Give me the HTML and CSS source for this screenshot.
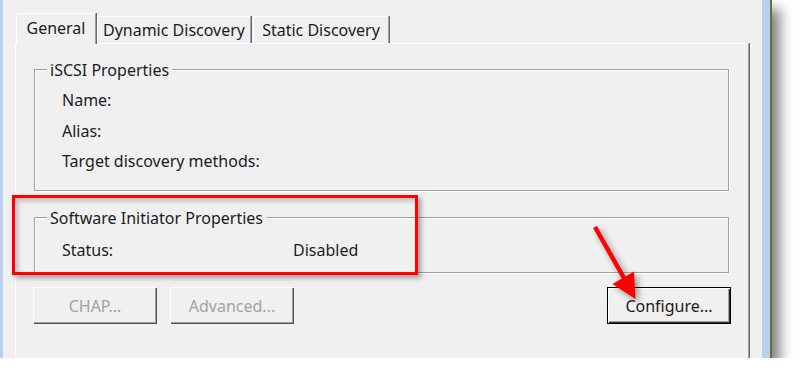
FILE: index.html
```html
<!DOCTYPE html>
<html lang="en">
<head>
<meta charset="utf-8">
<title>iSCSI Initiator Properties</title>
<link rel="stylesheet" href="styles.css">
</head>
<body>
<div class="shot">
  <div class="edge-left"></div>
  <div class="dialog">
    <div class="tabs">
      <div class="tab tab-general selected">General</div>
      <div class="tab tab-dynamic">Dynamic Discovery</div>
      <div class="tab tab-static">Static Discovery</div>
    </div>
    <div class="panel">
      <div class="group group-iscsi">
        <div class="group-title">iSCSI Properties</div>
        <div class="row">Name:</div>
        <div class="row">Alias:</div>
        <div class="row">Target discovery methods:</div>
      </div>
      <div class="group group-sw">
        <div class="group-title">Software Initiator Properties</div>
        <div class="row kv"><span>Status:</span><span>Disabled</span></div>
      </div>
      <div class="buttons">
        <button class="btn" disabled>CHAP...</button>
        <button class="btn" disabled>Advanced...</button>
        <button class="btn default">Configure...</button>
      </div>
    </div>
  </div>
  <div class="edge-right"></div>
  <div class="edge-line"></div>

  <div class="highlight"></div>
  <svg class="arrow" width="70" height="100" viewBox="0 0 70 100">
    <line x1="6" y1="7" x2="35" y2="58" stroke="#ff0000" stroke-width="4.5" stroke-linecap="butt"/>
    <polygon points="23.5,64 45,51.5 46.5,79" fill="#ff0000"/>
  </svg>
</div>
</body>
</html>
```
FILE: styles.css
```css
* { box-sizing: border-box; }
html, body { margin: 0; padding: 0; background: #ffffff; }
body {
  font-family: "Noto Sans", "Open Sans", sans-serif;
  font-size: 16px;
  color: #1b1b22;
}
.shot {
  position: relative;
  display: flex;
  width: 772px;
  height: 358px;
  box-shadow: 8px 9px 12px rgba(0, 0, 0, 0.5);
}
.edge-left { width: 3px; background: #b9d1ea; }
.edge-right { width: 8px; background: #b9d1ea; }
.edge-line { width: 2px; background: #6d6b3c; }
.dialog {
  flex: 1;
  background: #f0f0f0;
  padding: 13px 0 0 12px;
  display: flex;
  flex-direction: column;
}
.tabs {
  display: flex;
  align-items: flex-end;
  height: 30px;
  margin-left: 1px;
}
.tab {
  height: 27px;
  line-height: 27px;
  text-align: center;
  background: #f0f0f0;
  border-top: 1px solid #ffffff;
  border-left: 1px solid #ffffff;
  border-right: 1px solid #a0a0a0;
  box-shadow: 1px 0 0 #696969;
  border-top-left-radius: 2px;
  white-space: nowrap;
}
.tab.selected {
  height: 31px;
  line-height: 28px;
  margin-bottom: -1px;
  position: relative;
  z-index: 1;
}
.tab-general { width: 80px; }
.tab-dynamic { width: 154px; margin-left: 1px; }
.tab-static { width: 136px; margin-left: 2px; }
.panel {
  width: 734px;
  height: 315px;
  border-top: 1px solid #ffffff;
  border-left: 1px solid #ffffff;
  border-right: 1px solid #a0a0a0;
  box-shadow: 1px 0 0 #696969;
  overflow: hidden;
}
.group {
  margin-left: 18px;
  width: 695px;
  border: 1px solid #a0a0a0;
  box-shadow: inset 1px 1px 0 #ffffff, 1px 1px 0 #ffffff;
  padding-left: 27px;
}
.group-iscsi { margin-top: 25px; height: 122px; }
.group-sw { margin-top: 26px; height: 56px; }
.group-title {
  width: fit-content;
  margin: -10px 0 0 -15px;
  padding: 0 3px;
  height: 20px;
  line-height: 20px;
  background: #f0f0f0;
  position: relative;
}
.group-iscsi .group-title + .row { margin-top: 5px; }
.row {
  height: 30.5px;
  line-height: 30px;
}
.kv {
  display: grid;
  grid-template-columns: 231px auto;
  margin-top: 7px;
}
.buttons {
  display: flex;
  gap: 13px;
  padding: 0 17px;
  margin-top: 14px;
}
.btn {
  width: 124px;
  height: 37px;
  font: inherit;
  color: #1b1b22;
  background: #f0f0f0;
  border: none;
  border-radius: 0;
  padding: 0;
  box-shadow: inset 1px 1px 0 #ffffff, inset -1px -1px 0 #505050, inset -2px -2px 0 #a0a0a0;
}
.btn:disabled { color: #a2a2a2; }
.btn.default {
  margin-left: auto;
  border: 1px solid #000000;
  box-shadow: inset 1px 1px 0 #ffffff, inset -1px -1px 0 #303030, inset -2px -2px 0 #a0a0a0;
}
.highlight {
  position: absolute;
  left: 12px;
  top: 195px;
  width: 406px;
  height: 80px;
  border: 3px solid #ff0000;
  box-shadow: 3px 3px 5px rgba(0, 0, 0, 0.35), inset 3px 3px 5px rgba(0, 0, 0, 0.22);
}
.arrow {
  position: absolute;
  left: 589px;
  top: 220px;
  filter: drop-shadow(3px 3px 3px rgba(0, 0, 0, 0.4));
}
```
